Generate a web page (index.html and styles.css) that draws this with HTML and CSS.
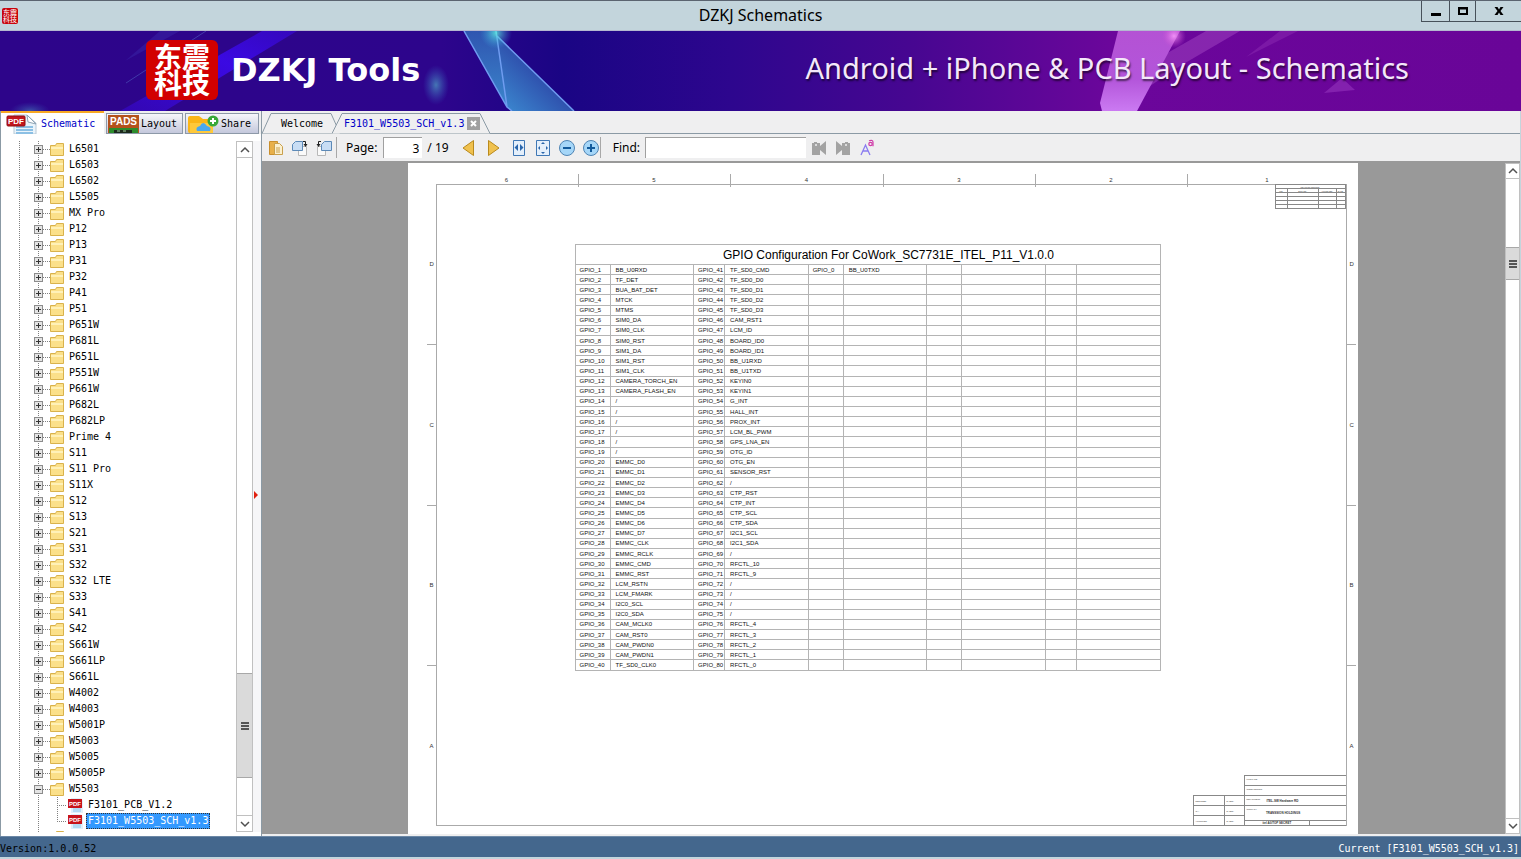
FILE: index.html
```html
<!DOCTYPE html>
<html lang="en">

<head>
    <meta charset="UTF-8">
    <title>DZKJ Schematics</title>
    <link rel="stylesheet" href="styles.css">
</head>

<body>
    <header class="titlebar">
        <span class="app-icon">东震<br>科技</span>
        <h1>DZKJ Schematics</h1>
        <div class="window-buttons">
            <button aria-label="Minimize"><svg width="12" height="12"><path d="M1 8h10v3H1z" /></svg></button>
            <button aria-label="Maximize"><svg width="12" height="12"><path d="M1 2h10v8H1zM3 4.500v3.500h6V4.500z" fill-rule="evenodd" /></svg></button>
            <button aria-label="Close"><svg width="12" height="12"><path d="M1.500 2h3L6 4.500 7.500 2h3L7.500 6l3 4h-3L6 7.500 4.500 10h-3l3-4z" /></svg></button>
        </div>
    </header>

    <div class="banner">
        <svg class="banner-art" viewBox="0 0 1521 80" preserveAspectRatio="none" aria-hidden="true">
            <defs>
                <linearGradient id="sky">
                    <stop offset="0" stop-color="#2d058a" />
                    <stop offset=".29" stop-color="#2d058c" />
                    <stop offset=".37" stop-color="#1a0584" />
                    <stop offset=".48" stop-color="#2d068e" />
                    <stop offset=".6" stop-color="#470691" />
                    <stop offset=".73" stop-color="#6b069b" />
                    <stop offset="1" stop-color="#690598" />
                </linearGradient>
                <linearGradient id="beam" x1="1" y1="0" x2="0" y2="1">
                    <stop offset="0" stop-color="#3c0aec" stop-opacity=".5" />
                    <stop offset=".4" stop-color="#3c0aec" stop-opacity=".9" />
                    <stop offset="1" stop-color="#3c0aec" stop-opacity=".4" />
                </linearGradient>
                <linearGradient id="shard" x1="0" y1="0" x2="0" y2="1">
                    <stop offset="0" stop-color="#2f55b0" />
                    <stop offset="1" stop-color="#3b86cc" />
                </linearGradient>
                <linearGradient id="shard2" x1="1" y1="0" x2="0" y2="1">
                    <stop offset="0" stop-color="#2a2a9c" />
                    <stop offset=".5" stop-color="#2f52ae" />
                    <stop offset="1" stop-color="#3d8fd4" />
                </linearGradient>
                <linearGradient id="pink" x1="0" y1="0" x2="0" y2="1">
                    <stop offset="0" stop-color="#b452d4" />
                    <stop offset=".6" stop-color="#b355da" />
                    <stop offset="1" stop-color="#cb7af2" />
                </linearGradient>
                <radialGradient id="glow">
                    <stop offset="0" stop-color="#5ff0e0" stop-opacity=".8" />
                    <stop offset="1" stop-color="#3aa0e0" stop-opacity="0" />
                </radialGradient>
                <radialGradient id="flare">
                    <stop offset="0" stop-color="#ffa0ff" stop-opacity=".8" />
                    <stop offset="1" stop-color="#d050d0" stop-opacity="0" />
                </radialGradient>
            </defs>
            <path d="M0 0h1521v80H0z" fill="url(#sky)" />
            <path d="M262 0h35L165 80h-45z" fill="url(#beam)" />
            <path d="M160 0h20l-55 30z" fill="#3b2db0" opacity=".4" />
            <path d="M206 0L126 52" stroke="#4a50b8" opacity=".7" />
            <ellipse cx="30" cy="80" rx="20" ry="9" fill="url(#glow)" opacity=".4" />
            <ellipse cx="436" cy="54" rx="13" ry="20" fill="url(#glow)" opacity=".6" />
            <path d="M464 0h32l11 76z" fill="url(#shard)" />
            <path d="M496 4l11 72 4 4h63z" fill="url(#shard2)" />
            <path d="M464 0l43 76 5 4M496 0l11 76M496 4l78 76" fill="none" stroke="#6f9cf0" stroke-width="1.500" />
            <circle cx="496" cy="2" r="16" fill="url(#glow)" />
            <path d="M1206 0h34l-60 35-45 30 20-36z" fill="#9a3cbc" opacity=".6" />
            <path d="M1280 0h18l-52 26z" fill="#9a3cbc" opacity=".35" />
            <path d="M1118 0h62l-43 80h-35l-2-8z" fill="url(#pink)" />
            <path d="M1342 47l13 12-31 3z" fill="#9434bd" opacity=".6" />
            <circle cx="1174" cy="5" r="12" fill="url(#flare)" />
        </svg>
        <div class="logo">东震<br>科技</div>
        <div class="brand">DZKJ Tools</div>
        <div class="slogan">Android + iPhone &amp; PCB Layout - Schematics</div>
    </div>

    <main class="workspace">
        <aside class="sidebar">
            <nav class="side-tabs">
                <button class="side-tab active">
                    <svg width="32" height="20" viewBox="0 0 32 20">
                        <path d="M8 1h13l9 8v11H8z" fill="#eaf4fb" stroke="#b7c9d6" />
                        <path d="M21 1l9 9-8-2z" fill="#fff" stroke="#8fa5b5" />
                        <path d="M10 13h17M10 16h17M10 19h17" stroke="#8cc0e4" stroke-width="2" />
                        <rect x="1" y="2" width="18" height="10" rx="1" fill="#c4161c" stroke="#8f0d12" />
                        <text x="2" y="10" font-family="Liberation Sans" font-size="8" font-weight="bold" fill="#fff">PDF</text>
                    </svg>Schematic
                </button>
                <button class="side-tab">
                    <svg width="31" height="18" viewBox="0 0 31 18">
                        <path d="M0 0h31v18H0z" fill="#b4521c" />
                        <path d="M1 13h29v5H1z" fill="#2c8c2c" />
                        <path d="M6 15h18v3H6z" fill="#1c2a1c" />
                        <path d="M9 16h3M15 16h3" stroke="#9c9" />
                        <text x="2" y="10" font-family="Liberation Sans" font-size="10" font-weight="bold" fill="#fff">PADS</text>
                    </svg>Layout
                </button>
                <button class="side-tab">
                    <svg width="32" height="18" viewBox="0 0 32 18">
                        <path d="M1 3q0-2 2-2h9l4 3h10v14H3q-2 0-2-2z" fill="#fbb617" />
                        <path d="M3 8h23v10H3z" fill="#ffc93a" />
                        <path d="M10 16q-2-4 3-5 3-6 7 0 5 1 3 5z" fill="#4aa8ee" />
                        <circle cx="26" cy="6" r="5.500" fill="#38a838" />
                        <path d="M26 3v6M23 6h6" stroke="#fff" stroke-width="2" />
                    </svg>Share
                </button>
            </nav>
            <div class="tree-panel">
                <ul class="tree" id="tree"></ul>
                <div class="scrollbar tree-scroll">
                    <button aria-label="Scroll up"><svg width="10" height="8"><path d="M1 6l4-4 4 4" /></svg></button>
                    <div class="track"><div class="thumb"></div></div>
                    <button aria-label="Scroll down"><svg width="10" height="8"><path d="M1 2l4 4 4-4" /></svg></button>
                </div>
                <div class="splitter"></div>
            </div>
        </aside>

        <section class="document">
            <nav class="doc-tabs">
                <button class="doc-tab welcome">
                    <svg width="78" height="21"><path d="M0 20.500L9 .5h60l9 20" /></svg>
                    <span>Welcome</span>
                </button>
                <div class="doc-tab current">
                    <svg width="158" height="21"><path d="M0 20.500L10 .5h138l10 20" /></svg>
                    <span>F3101_W5503_SCH_v1.3</span>
                    <button class="close-tab" aria-label="Close tab"><svg width="7" height="7"><path d="M1 1l5 5M6 1L1 6" /></svg></button>
                </div>
            </nav>

            <div class="toolbar">
                <button aria-label="Open">
                    <svg width="16" height="16"><path d="M1.500 1.500h8v13h-8z" fill="#e8b04a" stroke="#c98f2d" /><path d="M6.500 3.500h5l3 3v8h-8z" fill="#fbf0cf" stroke="#c9a04d" /><path d="M8 8h4M8 10h4M8 12h4" stroke="#c9a04d" /></svg>
                </button>
                <button aria-label="Rotate right">
                    <svg width="16" height="16"><path d="M6.500 6.500h8v9h-8z" fill="#fafafa" stroke="#b8b8b8" /><path d="M3.500 1.500h7v9h-10v-6z" fill="#c8ddf4" stroke="#5d8ab8" /><path d="M11 1.500h2.500V5" fill="none" stroke="#222" /><path d="M11.500 4h4l-2 3z" fill="#222" /></svg>
                </button>
                <button aria-label="Rotate left">
                    <svg width="16" height="16"><path d="M1.500 6.500h8v9h-8z" fill="#fafafa" stroke="#b8b8b8" /><path d="M8.500 1.500h7v9h-10v-6z" fill="#c8ddf4" stroke="#5d8ab8" /><path d="M5 1.500H2.500V5" fill="none" stroke="#222" /><path d="M.5 4h4l-2 3z" fill="#222" /></svg>
                </button>
                <span class="separator"></span>
                <label for="page">Page:</label>
                <input class="page-input" id="page" type="text" value="3">
                <span class="page-count">/ 19</span>
                <button class="wide" aria-label="Previous page">
                    <svg width="14" height="18"><path d="M12.500 1.500v15L2 9z" fill="#f0c14e" stroke="#b98a1d" /></svg>
                </button>
                <button class="wide" aria-label="Next page">
                    <svg width="14" height="18"><path d="M1.500 1.500v15L12 9z" fill="#f0c14e" stroke="#b98a1d" /></svg>
                </button>
                <button aria-label="Fit width">
                    <svg width="14" height="18"><path d="M1.500 1.500h11v15h-11z" fill="#e4effb" stroke="#3f77b5" /><path d="M6 5v7L2.500 8.500zM8 5v7l3.500-3.500z" fill="#2a66ac" /></svg>
                </button>
                <button aria-label="Fit page">
                    <svg width="16" height="18"><path d="M1.500 1.500h13v15h-13z" fill="#e4effb" stroke="#3f77b5" /><path d="M6 5h4L8 3zM6 13h4l-2 2zM5 7v4L3 9zM11 7v4l2-2z" fill="#2a66ac" /></svg>
                </button>
                <button aria-label="Zoom out">
                    <svg width="18" height="18"><circle cx="9" cy="9" r="7.500" fill="#a5d6f8" stroke="#4f84b4" /><path d="M5 9h8" stroke="#125a9c" stroke-width="2" /></svg>
                </button>
                <button aria-label="Zoom in">
                    <svg width="18" height="18"><circle cx="9" cy="9" r="7.500" fill="#a5d6f8" stroke="#4f84b4" /><path d="M5 9h8M9 5v8" stroke="#125a9c" stroke-width="2" /></svg>
                </button>
                <span class="separator zoom-end"></span>
                <label for="find">Find:</label>
                <input class="find-input" id="find" type="text">
                <button aria-label="Find previous">
                    <svg width="16" height="16"><path d="M1 3h2V2h3v1h3v3l6-5v14l-6-5v5H1z" fill="#a3a3a3" /><circle cx="5" cy="5" r="1" fill="#eee" /></svg>
                </button>
                <button aria-label="Find next">
                    <svg width="16" height="16"><path d="M15 3h-2V2h-3v1H7v3L1 1v14l6-5v5h8z" fill="#a3a3a3" /><circle cx="11" cy="5" r="1" fill="#eee" /></svg>
                </button>
                <button aria-label="Match case">
                    <svg width="16" height="18"><path d="M2 16L6.500 6 11 16M4 12h5.500" fill="none" stroke="#8a7cf0" stroke-width="1.300" /><circle cx="11.500" cy="5" r="1.700" fill="none" stroke="#d03aa8" stroke-width="1.200" /><path d="M10 1.800q4-1.300 4 1.500v4" fill="none" stroke="#d03aa8" stroke-width="1.200" /></svg>
                </button>
            </div>

            <div class="viewer">
                <div class="canvas">
                    <div class="sheet">
                        <div class="ruler-top"><span>6</span><span>5</span><span>4</span><span>3</span><span>2</span><span>1</span></div>
                        <div class="ruler-side"><span>D</span><span>C</span><span>B</span><span>A</span></div>
                        <div class="frame">
                            <table class="revisions">
                                <colgroup>
                                    <col class="ltr"><col class="eco"><col class="approved"><col class="date">
                                </colgroup>
                                <tr><td colspan="4">REVISION RECORD</td></tr>
                                <tr><td>LTR</td><td>ECO NO:</td><td>APPROVED:</td><td>DATE:</td></tr>
                                <tr><td></td><td></td><td></td><td></td></tr>
                                <tr><td></td><td></td><td></td><td></td></tr>
                                <tr><td></td><td></td><td></td><td></td></tr>
                                <tr><td></td><td></td><td></td><td></td></tr>
                            </table>
                            <table class="gpio">
                                <colgroup>
                                    <col class="pin"><col class="net"><col class="pin-narrow"><col class="net"><col class="pin"><col class="net"><col class="pin"><col class="net"><col class="pin-narrow"><col class="net">
                                </colgroup>
                                <thead>
                                    <tr><th colspan="10">GPIO Configuration For CoWork_SC7731E_ITEL_P11_V1.0.0</th></tr>
                                </thead>
                                <tbody id="gpio"></tbody>
                            </table>
                            <div class="title-block">
                                <table class="signatures">
                                    <tr><td>DESIGNED:</td><td>DATED:</td></tr>
                                    <tr><td>QA:</td><td>DATED:</td></tr>
                                    <tr><td>APPROVED:</td><td>DATED:</td></tr>
                                </table>
                                <div class="project">
                                    <div class="line">FILE NAME:</div>
                                    <div class="line">CODE/VERSION:</div>
                                    <div class="line">DEPARTMENT:<b>ITEL-SW Hardware RD</b></div>
                                    <div class="line company">COMPANY:<b>TRANSSION HOLDINGS</b></div>
                                    <div class="line secret"><b>itel A0/TOP SECRET</b></div>
                                </div>
                            </div>
                        </div>
                        <div class="ruler-side right"><span>D</span><span>C</span><span>B</span><span>A</span></div>
                    </div>
                </div>
                <div class="scrollbar view-scroll">
                    <button aria-label="Scroll up"><svg width="10" height="8"><path d="M1 6l4-4 4 4" /></svg></button>
                    <div class="track"><div class="thumb"></div></div>
                    <button aria-label="Scroll down"><svg width="10" height="8"><path d="M1 2l4 4 4-4" /></svg></button>
                </div>
            </div>
        </section>
    </main>

    <footer class="statusbar">
        <span>Version:1.0.0.52</span>
        <span class="current-file">Current [F3101_W5503_SCH_v1.3]</span>
    </footer>

    <script src="script.js"></script>
</body>

</html>
```

FILE: styles.css
```css
* {
    box-sizing: border-box;
}

body {
    margin: 0;
    height: 100vh;
    display: flex;
    flex-direction: column;
    overflow: hidden;
    background: #c3d5dc;
    color: #000;
    font-family: "DejaVu Sans Mono", monospace;
    font-size: 10px;
}

button {
    font: inherit;
    color: inherit;
    background: none;
    border: 0;
    padding: 0;
}

svg {
    display: block;
    flex: none;
}

/* Title bar */
.titlebar {
    flex: none;
    height: 31px;
    display: grid;
    grid-template-columns: 1fr auto 1fr;
    align-items: center;
    border-top: 1px solid #5b6470;
    border-bottom: 1px solid #b4b8d0;
    background: #c3d5dc;
}

.titlebar h1 {
    margin: 0;
    padding-bottom: 2px;
    font: 16px/20px "Noto Sans", sans-serif;
}

.app-icon {
    width: 16px;
    height: 16px;
    margin-left: 2px;
    border-radius: 2px;
    background: #c8040c;
    color: #fff;
    font: 7px/7px "Noto Sans CJK SC", sans-serif;
    text-align: center;
    padding-top: 1px;
}

.window-buttons {
    align-self: start;
    justify-self: end;
    display: flex;
    height: 21px;
    border: solid #47515a;
    border-width: 0 0 1px 1px;
}

.window-buttons button {
    width: 28px;
    display: flex;
    align-items: center;
    justify-content: center;
    border-right: 1px solid #47515a;
}

.window-buttons button:nth-child(2) {
    width: 26px;
}

.window-buttons button:last-child {
    width: 45px;
    border-right: 0;
}

/* Banner */
.banner {
    flex: none;
    position: relative;
    height: 80px;
    display: flex;
    align-items: center;
    padding: 0 112px 2px 146px;
    color: #fff;
    white-space: nowrap;
}

.banner-art {
    position: absolute;
    top: 0;
    left: 0;
    width: 100%;
    height: 100%;
}

.logo,
.brand,
.slogan {
    position: relative;
}

.logo {
    width: 72px;
    height: 60px;
    border-radius: 6px;
    background: #d20000;
    font: bold 28px/26px "Noto Sans CJK SC", sans-serif;
    text-align: center;
    padding-top: 3px;
}

.brand {
    margin-left: 13px;
    font: bold 32px/40px "DejaVu Sans", sans-serif;
}

.slogan {
    margin-left: auto;
    padding-bottom: 4px;
    font: 29px/36px "Noto Sans", sans-serif;
    color: #f4e8fa;
    text-shadow: 1px 2px 2px #0009;
}

/* Workspace */
.workspace {
    flex: 1;
    min-height: 0;
    display: flex;
    background: #efeff0;
    border-right: 1px solid #c3d5dc;
}

.sidebar {
    width: 261px;
    flex: none;
    display: flex;
    flex-direction: column;
    border-left: 1px solid #8b9aa5;
}

.side-tabs {
    height: 23px;
    flex: none;
    display: flex;
    align-items: flex-end;
    gap: 2px;
}

.side-tab {
    height: 21px;
    width: 77px;
    display: flex;
    align-items: center;
    gap: 2px;
    padding-left: 1px;
    border: 1px solid #8d99a8;
    background: linear-gradient(#f6f6fa, #c4c8dc);
    overflow: hidden;
}

.side-tab.active {
    width: 103px;
    height: 23px;
    gap: 3px;
    padding-left: 5px;
    border: 0;
    border-top: 2px solid #f7a823;
    background: #fff;
    color: #0000c8;
}

.side-tab:last-child {
    width: 74px;
}

.tree-panel {
    flex: 1;
    min-height: 0;
    display: flex;
    padding: 7px 0 4px;
    background: #fff;
}

.tree {
    flex: 1;
    margin: 0;
    padding: 0;
    list-style: none;
    overflow: hidden;
    background: repeating-linear-gradient(#808080 0 1px, transparent 1px 2px) 18px 0 / 1px 100% no-repeat,
        repeating-linear-gradient(#808080 0 1px, transparent 1px 2px) 37px 0 / 1px 100% no-repeat;
}

.tree li {
    height: 16px;
    display: flex;
    align-items: center;
    padding-left: 33px;
    white-space: nowrap;
}

.tree button {
    width: 9px;
    height: 9px;
    flex: none;
    border: 1px solid #8c8c8c;
    background: linear-gradient(#333, #333) center / 5px 1px no-repeat, #e4e4e4;
}

.tree .closed button {
    background: linear-gradient(#333, #333) center / 5px 1px no-repeat, linear-gradient(#333, #333) center / 1px 5px no-repeat, #e4e4e4;
}

.tree .stem {
    width: 7px;
    height: 1px;
    flex: none;
    background: repeating-linear-gradient(90deg, #808080 0 1px, transparent 1px 2px);
}

.tree .label {
    margin-left: 4px;
    padding: 0 1px;
    line-height: 16px;
}

.tree .file {
    padding-left: 56px;
    background: repeating-linear-gradient(#808080 0 1px, transparent 1px 2px) 56px 0 / 1px 100% no-repeat;
}

.tree .file .stem {
    width: 10px;
}

.tree .file .label {
    margin-left: 2px;
    line-height: 14px;
    border: 1px solid transparent;
}

.tree .selected {
    background-size: 1px 50%;
}

.tree .selected .label {
    background: #3399ff;
    color: #fff;
    border: 1px dotted #333;
}

/* Scrollbars */
.scrollbar {
    flex: none;
    display: flex;
    flex-direction: column;
    width: 17px;
    background: #fff;
    border: solid #c0c0c0;
    border-width: 0 1px;
}

.scrollbar button {
    height: 17px;
    display: flex;
    align-items: center;
    justify-content: center;
    border: solid #c0c0c0;
    border-width: 1px 0;
}

.scrollbar svg {
    fill: none;
    stroke: #505050;
    stroke-width: 1.5px;
}

.track {
    flex: 1;
}

.thumb {
    height: 105px;
    margin-top: 515px;
    border: solid #a8a8a8;
    border-width: 1px 0;
    background: repeating-linear-gradient(#555 0 2px, transparent 2px 3px) center / 8px 8px no-repeat, #dadada;
}

.view-scroll {
    width: 15px;
}

.view-scroll button {
    height: 16px;
}

.view-scroll .thumb {
    height: 33px;
    margin-top: 68px;
}

.splitter {
    width: 8px;
    flex: none;
    display: flex;
    align-items: center;
    background: #f6f6f8;
}

.splitter::before {
    content: "";
    border: 4px solid transparent;
    border-left-color: #e02010;
    border-right: 0;
    margin-left: 1px;
    margin-top: 16px;
}

/* Document area */
.document {
    flex: 1;
    min-width: 0;
    display: flex;
    flex-direction: column;
    border-left: 1px solid #8b9aa5;
}

.doc-tabs {
    flex: none;
    height: 23px;
    display: flex;
    align-items: flex-end;
    background: linear-gradient(#8b9aa5, #8b9aa5) bottom / 100% 1px no-repeat;
}

.doc-tab {
    position: relative;
    height: 21px;
    display: flex;
    align-items: center;
}

.doc-tab > svg {
    position: absolute;
    top: 0;
    left: 0;
    fill: #efeff0;
    stroke: #8b9aa5;
}

.doc-tab span {
    position: relative;
}

.welcome {
    width: 70px;
    padding-left: 19px;
}

.current {
    width: 158px;
    padding-left: 12px;
    gap: 3px;
    color: #0000c8;
}

.close-tab {
    position: relative;
    width: 13px;
    height: 13px;
    display: flex;
    align-items: center;
    justify-content: center;
    background: #a0a0a0;
}

.close-tab svg {
    stroke: #fff;
    stroke-width: 2px;
}

.toolbar {
    flex: none;
    height: 29px;
    display: flex;
    align-items: center;
    padding-left: 2px;
    border-bottom: 2px solid #999;
    font: 12px/20px "Noto Sans", sans-serif;
}

.toolbar button {
    width: 24px;
    display: flex;
    justify-content: center;
}

.toolbar .wide {
    width: 26px;
}

.toolbar input {
    height: 21px;
    padding: 0 3px;
    border: solid #a0a0a0;
    border-width: 1px 0 0 1px;
    background: #fff;
    font: inherit;
}

.separator {
    width: 1px;
    height: 21px;
    margin-right: 9px;
    background: #a8a8a8;
}

.zoom-end {
    margin-left: -3px;
    margin-right: 12px;
}

.toolbar .page-input {
    width: 39px;
    margin: 0 5px 0 6px;
    text-align: right;
}

.page-count {
    margin-right: 6px;
}

.find-input {
    width: 161px;
    margin: 0 1px 0 5px;
}

.viewer {
    flex: 1;
    min-height: 0;
    display: flex;
    margin-bottom: 2px;
    background: #999;
}

.canvas {
    flex: 1;
    min-width: 0;
    display: flex;
    justify-content: center;
    overflow: hidden;
    padding-right: 2px;
}

/* The schematic page */
.sheet {
    width: 950px;
    flex: none;
    display: grid;
    grid-template: 21px 642px 8px / 28px 911px 11px;
    background: #fff;
    color: #333;
    font: 6px/8px "Liberation Sans", sans-serif;
}

.ruler-top {
    grid-area: 1 / 2;
    align-self: end;
    height: 10px;
    display: grid;
    grid-template-columns: 143px 152px 153px 152px 152px 1fr;
    line-height: 13px;
    text-align: center;
}

.ruler-top span {
    border-right: 1px solid #aaa;
}

.ruler-side {
    grid-area: 2 / 1;
    justify-self: end;
    width: 9px;
    display: flex;
    flex-direction: column;
}

.ruler-side.right {
    grid-area: 2 / 3;
    justify-self: start;
}

.ruler-side span {
    flex: 1;
    display: flex;
    align-items: center;
    padding-left: 3px;
    border-bottom: 1px solid #aaa;
}

.ruler-top span:last-child,
.ruler-side span:last-child {
    border: 0;
}

.frame {
    grid-area: 2 / 2;
    display: flex;
    flex-direction: column;
    border: 1px solid #aaa;
}

.sheet table {
    border-collapse: collapse;
    table-layout: fixed;
}

.sheet td,
.sheet th {
    padding: 0;
    border: 1px solid #b4b4b4;
    white-space: nowrap;
}

.revisions {
    align-self: flex-end;
    width: 71px;
    margin-top: -1px;
    text-align: center;
    font-size: 2px;
}

.revisions .ltr {
    width: 12px;
}

.revisions .eco {
    width: 31px;
}

.revisions .approved {
    width: 18px;
}

.revisions td {
    height: 4px;
    line-height: 2px;
    border-color: #888;
}

.gpio {
    width: 586px;
    height: 427px;
    margin: 35px 0 0 138px;
    color: #111;
}

.gpio .pin {
    width: 35px;
}

.gpio .pin-narrow {
    width: 31px;
}

.gpio th {
    height: 20px;
    padding-left: 42px;
    font: 12px/18px "Liberation Sans", sans-serif;
    color: #000;
}

.gpio td {
    padding-left: 4px;
}

.gpio td:nth-child(even) {
    padding-left: 5px;
}

.title-block {
    margin-top: auto;
    margin-bottom: -1px;
    display: flex;
    align-self: flex-end;
    align-items: flex-end;
    font-size: 2px;
    line-height: 4px;
}

.signatures {
    width: 52px;
    height: 31px;
}

.sheet .signatures td {
    padding-left: 2px;
    border-color: #888;
}

.signatures td:first-child {
    width: 31px;
}

.project {
    width: 102px;
    margin-left: -1px;
    border: solid #888;
    border-width: 1px 0 0 1px;
}

.line {
    display: flex;
    height: 10px;
    padding: 1px 2px;
    border-bottom: 1px solid #888;
}

.line b {
    margin-left: 6px;
    font-size: 3px;
    line-height: 8px;
}

.line.company {
    height: 15px;
}

.company b {
    margin-left: 9px;
    line-height: 13px;
}

.line.secret {
    height: 5px;
    padding: 0;
    background: linear-gradient(#888, #888) 64px 0 / 1px 100% no-repeat;
}

.secret b {
    margin-left: 18px;
    line-height: 4px;
}

/* Status bar */
.statusbar {
    flex: none;
    height: 21px;
    margin-bottom: 2px;
    display: flex;
    justify-content: space-between;
    padding: 4px 2px 0 0;
    border-top: 1px solid #6c88a6;
    background: #44678d;
    line-height: 16px;
}

.current-file {
    color: #fff;
}
```

FILE: script.js
```js
const folders = ['L6501', 'L6503', 'L6502', 'L5505', 'MX Pro', 'P12', 'P13', 'P31', 'P32', 'P41', 'P51',
    'P651W', 'P681L', 'P651L', 'P551W', 'P661W', 'P682L', 'P682LP', 'Prime 4', 'S11', 'S11 Pro', 'S11X',
    'S12', 'S13', 'S21', 'S31', 'S32', 'S32 LTE', 'S33', 'S41', 'S42', 'S661W', 'S661LP', 'S661L',
    'W4002', 'W4003', 'W5001P', 'W5003', 'W5005', 'W5005P', 'W5503'];
const files = ['F3101_PCB_V1.2', 'F3101_W5503_SCH_v1.3'];

const folderIcon = `<svg width="14" height="13"><path d="M.5 2.500h5l1-2h7v12H.5z" fill="#fbe08a" stroke="#d9b24c"/><path d="M1 4h12v2H1z" fill="#fff1b8"/></svg>`;
const pdfIcon = `<svg width="17" height="16"><path d="M4 1h10l2 3v12H4z" fill="#dff1fb"/><path d="M6 12h8M6 14h8" stroke="#86c5ea"/>
    <path d="M1 2h14v9H1z" fill="#c8141a"/><text x="2" y="9" font-family="Liberation Sans" font-size="6" font-weight="bold" fill="#fff">PDF</text></svg>`;

let rows = '';
for (const name of folders) {
    const open = name === 'W5503';
    rows += `<li class="${open ? 'open' : 'closed'}"><button aria-label="Toggle ${name}"></button><span class="stem"></span>${folderIcon}<span class="label">${name}</span></li>`;
}
files.forEach((name, i) => {
    rows += `<li class="file${i === 1 ? ' selected' : ''}"><span class="stem"></span>${pdfIcon}<span class="label">${name}</span></li>`;
});
// next folder, only its top edge is scrolled into view
rows += `<li class="closed"><button aria-label="Toggle"></button><span class="stem"></span>${folderIcon}</li>`;
document.getElementById('tree').innerHTML = rows;

// GPIO_1 - GPIO_40
const low = ['BB_U0RXD', 'TF_DET', 'BUA_BAT_DET', 'MTCK', 'MTMS', 'SIM0_DA', 'SIM0_CLK', 'SIM0_RST', 'SIM1_DA',
    'SIM1_RST', 'SIM1_CLK', 'CAMERA_TORCH_EN', 'CAMERA_FLASH_EN', '/', '/', '/', '/', '/', '/', 'EMMC_D0',
    'EMMC_D1', 'EMMC_D2', 'EMMC_D3', 'EMMC_D4', 'EMMC_D5', 'EMMC_D6', 'EMMC_D7', 'EMMC_CLK', 'EMMC_RCLK',
    'EMMC_CMD', 'EMMC_RST', 'LCM_RSTN', 'LCM_FMARK', 'I2C0_SCL', 'I2C0_SDA', 'CAM_MCLK0', 'CAM_RST0',
    'CAM_PWDN0', 'CAM_PWDN1', 'TF_SD0_CLK0'];
// GPIO_41 - GPIO_80
const high = ['TF_SD0_CMD', 'TF_SD0_D0', 'TF_SD0_D1', 'TF_SD0_D2', 'TF_SD0_D3', 'CAM_RST1', 'LCM_ID', 'BOARD_ID0',
    'BOARD_ID1', 'BB_U1RXD', 'BB_U1TXD', 'KEYIN0', 'KEYIN1', 'G_INT', 'HALL_INT', 'PROX_INT', 'LCM_BL_PWM',
    'GPS_LNA_EN', 'OTG_ID', 'OTG_EN', 'SENSOR_RST', '/', 'CTP_RST', 'CTP_INT', 'CTP_SCL', 'CTP_SDA',
    'I2C1_SCL', 'I2C1_SDA', '/', 'RFCTL_10', 'RFCTL_9', '/', '/', '/', '/', 'RFCTL_4', 'RFCTL_3',
    'RFCTL_2', 'RFCTL_1', 'RFCTL_0'];

document.getElementById('gpio').innerHTML = low.map((net, i) => {
    const cells = [`GPIO_${i + 1}`, net, `GPIO_${i + 41}`, high[i], i ? '' : 'GPIO_0', i ? '' : 'BB_U0TXD', '', '', '', ''];
    return '<tr>' + cells.map(c => `<td>${c}</td>`).join('') + '</tr>';
}).join('');
```
